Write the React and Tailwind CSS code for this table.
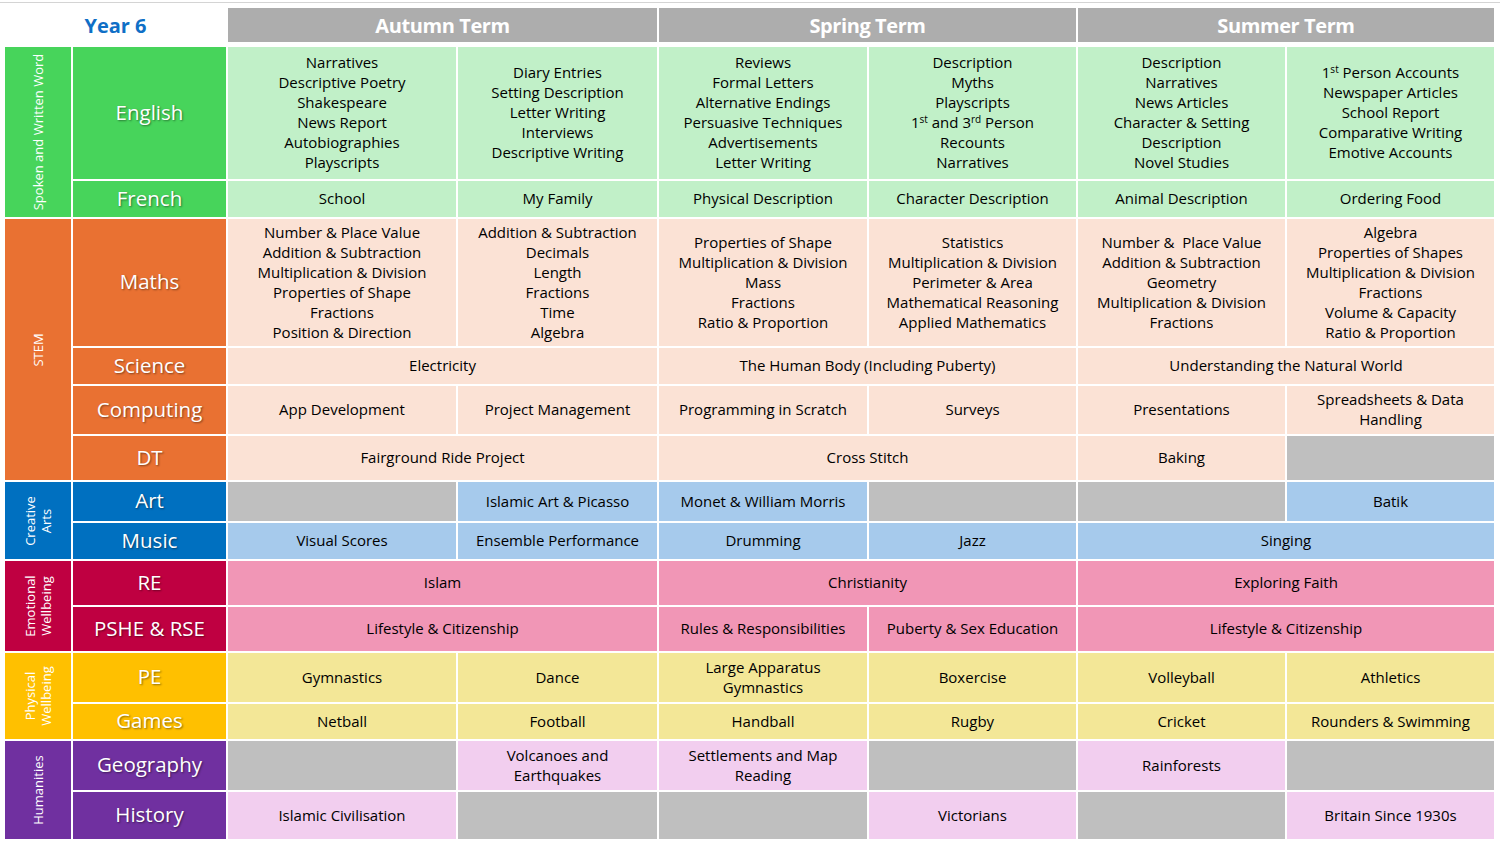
import React from 'react';

const FONT = "font-['Open_Sans','Liberation_Sans',sans-serif]";

const GREY = 'bg-[#bfbfbf]';

const groups = [
  {
    name: ['Spoken and Written Word'],
    bg: 'bg-[#47d45b]',
    cell: 'bg-[#c1f0c8]',
    rows: [
      {
        subject: 'English',
        cells: [
          { lines: ['Narratives', 'Descriptive Poetry', 'Shakespeare', 'News Report', 'Autobiographies', 'Playscripts'] },
          { lines: ['Diary Entries', 'Setting Description', 'Letter Writing', 'Interviews', 'Descriptive Writing'] },
          { lines: ['Reviews', 'Formal Letters', 'Alternative Endings', 'Persuasive Techniques', 'Advertisements', 'Letter Writing'] },
          {
            lines: [
              'Description',
              'Myths',
              'Playscripts',
              <>1<sup className="text-[10px]">st</sup> and 3<sup className="text-[10px]">rd</sup> Person</>,
              'Recounts',
              'Narratives',
            ],
          },
          { lines: ['Description', 'Narratives', 'News Articles', 'Character & Setting', 'Description', 'Novel Studies'] },
          {
            lines: [
              <>1<sup className="text-[10px]">st</sup> Person Accounts</>,
              'Newspaper Articles',
              'School Report',
              'Comparative Writing',
              'Emotive Accounts',
            ],
          },
        ],
      },
      {
        subject: 'French',
        cells: [
          { lines: ['School'] },
          { lines: ['My Family'] },
          { lines: ['Physical Description'] },
          { lines: ['Character Description'] },
          { lines: ['Animal Description'] },
          { lines: ['Ordering Food'] },
        ],
      },
    ],
  },
  {
    name: ['STEM'],
    bg: 'bg-[#e97132]',
    cell: 'bg-[#fbe2d5]',
    rows: [
      {
        subject: 'Maths',
        cells: [
          { lines: ['Number & Place Value', 'Addition & Subtraction', 'Multiplication & Division', 'Properties of Shape', 'Fractions', 'Position & Direction'] },
          { lines: ['Addition & Subtraction', 'Decimals', 'Length', 'Fractions', 'Time', 'Algebra'] },
          { lines: ['Properties of Shape', 'Multiplication & Division', 'Mass', 'Fractions', 'Ratio & Proportion'] },
          { lines: ['Statistics', 'Multiplication & Division', 'Perimeter & Area', 'Mathematical Reasoning', 'Applied Mathematics'] },
          { lines: ['Number &  Place Value', 'Addition & Subtraction', 'Geometry', 'Multiplication & Division', 'Fractions'] },
          { lines: ['Algebra', 'Properties of Shapes', 'Multiplication & Division', 'Fractions', 'Volume & Capacity', 'Ratio & Proportion'] },
        ],
      },
      {
        subject: 'Science',
        cells: [
          { lines: ['Electricity'], span: 2 },
          { lines: ['The Human Body (Including Puberty)'], span: 2 },
          { lines: ['Understanding the Natural World'], span: 2 },
        ],
      },
      {
        subject: 'Computing',
        cells: [
          { lines: ['App Development'] },
          { lines: ['Project Management'] },
          { lines: ['Programming in Scratch'] },
          { lines: ['Surveys'] },
          { lines: ['Presentations'] },
          { lines: ['Spreadsheets & Data', 'Handling'] },
        ],
      },
      {
        subject: 'DT',
        cells: [
          { lines: ['Fairground Ride Project'], span: 2 },
          { lines: ['Cross Stitch'], span: 2 },
          { lines: ['Baking'] },
          { empty: true },
        ],
      },
    ],
  },
  {
    name: ['Creative', 'Arts'],
    bg: 'bg-[#0070c0]',
    cell: 'bg-[#a6caec]',
    rows: [
      {
        subject: 'Art',
        cells: [
          { empty: true },
          { lines: ['Islamic Art & Picasso'] },
          { lines: ['Monet & William Morris'] },
          { empty: true },
          { empty: true },
          { lines: ['Batik'] },
        ],
      },
      {
        subject: 'Music',
        cells: [
          { lines: ['Visual Scores'] },
          { lines: ['Ensemble Performance'] },
          { lines: ['Drumming'] },
          { lines: ['Jazz'] },
          { lines: ['Singing'], span: 2 },
        ],
      },
    ],
  },
  {
    name: ['Emotional', 'Wellbeing'],
    bg: 'bg-[#bf0041]',
    cell: 'bg-[#f196b6]',
    rows: [
      {
        subject: 'RE',
        cells: [
          { lines: ['Islam'], span: 2 },
          { lines: ['Christianity'], span: 2 },
          { lines: ['Exploring Faith'], span: 2 },
        ],
      },
      {
        subject: 'PSHE & RSE',
        cells: [
          { lines: ['Lifestyle & Citizenship'], span: 2 },
          { lines: ['Rules & Responsibilities'] },
          { lines: ['Puberty & Sex Education'] },
          { lines: ['Lifestyle & Citizenship'], span: 2 },
        ],
      },
    ],
  },
  {
    name: ['Physical', 'Wellbeing'],
    bg: 'bg-[#ffc000]',
    cell: 'bg-[#f3e797]',
    rows: [
      {
        subject: 'PE',
        cells: [
          { lines: ['Gymnastics'] },
          { lines: ['Dance'] },
          { lines: ['Large Apparatus', 'Gymnastics'] },
          { lines: ['Boxercise'] },
          { lines: ['Volleyball'] },
          { lines: ['Athletics'] },
        ],
      },
      {
        subject: 'Games',
        cells: [
          { lines: ['Netball'] },
          { lines: ['Football'] },
          { lines: ['Handball'] },
          { lines: ['Rugby'] },
          { lines: ['Cricket'] },
          { lines: ['Rounders & Swimming'] },
        ],
      },
    ],
  },
  {
    name: ['Humanities'],
    bg: 'bg-[#7030a0]',
    cell: 'bg-[#f2ceef]',
    rows: [
      {
        subject: 'Geography',
        cells: [
          { empty: true },
          { lines: ['Volcanoes and', 'Earthquakes'] },
          { lines: ['Settlements and Map', 'Reading'] },
          { empty: true },
          { lines: ['Rainforests'] },
          { empty: true },
        ],
      },
      {
        subject: 'History',
        cells: [
          { lines: ['Islamic Civilisation'] },
          { empty: true },
          { empty: true },
          { lines: ['Victorians'] },
          { empty: true },
          { lines: ['Britain Since 1930s'] },
        ],
      },
    ],
  },
];

const rowSpanClass = { 1: 'row-span-1', 2: 'row-span-2', 4: 'row-span-4' };

const GroupLabel = ({ group }) => (
  <div
    className={`${group.bg} ${rowSpanClass[group.rows.length]} flex items-center justify-center overflow-hidden`}
  >
    <div className="-rotate-90 whitespace-nowrap text-center text-[13px] leading-[16px] text-white">
      {group.name.map((line, i) => (
        <div key={i}>{line}</div>
      ))}
    </div>
  </div>
);

const Cell = ({ cell, bg }) => (
  <div
    className={`${cell.empty ? GREY : bg} ${cell.span === 2 ? 'col-span-2' : ''} flex flex-col items-center justify-center pb-[2px] text-center text-[15px] font-medium leading-5 text-black`}
  >
    {cell.lines && cell.lines.map((line, i) => <div key={i} className="whitespace-pre">{line}</div>)}
  </div>
);

export default function App() {
  return (
    <div className={`w-[1500px] h-[848px] bg-white ${FONT}`}>
      <div className="pt-[2px]">
        <div className="h-px bg-[#d4d4d4]" />
      </div>

      {/* term header */}
      <div className="mt-[5px] pl-[5px] grid grid-cols-[66px_153px_228px_199px_208px_207px_207px_207px] gap-x-[2px] h-[34px]">
        <div className="col-span-2 flex items-center justify-center pt-[2px] text-[20px] font-bold text-[#0f6fc6]">
          Year 6
        </div>
        {['Autumn Term', 'Spring Term', 'Summer Term'].map((t) => (
          <div
            key={t}
            className="col-span-2 bg-[#adadad] flex items-center justify-center pt-[2px] text-[20px] font-bold text-white tracking-[-0.4px]"
          >
            {t}
          </div>
        ))}
      </div>

      {/* table body */}
      <div className="mt-[5px] pl-[5px] grid grid-cols-[66px_153px_228px_199px_208px_207px_207px_207px] grid-rows-[132px_36px_127px_36px_48px_44px_39px_36px_44px_44px_49px_35px_49px_47px] gap-[2px]">
        {groups.map((g) => (
          <React.Fragment key={g.name.join(' ')}>
            <GroupLabel group={g} />
            {g.rows.map((r) => (
              <React.Fragment key={r.subject}>
                <div
                  className={`${g.bg} flex items-center justify-center pb-[2px] text-[20.5px] text-white [text-shadow:1px_1px_2px_rgba(0,0,0,0.45)]`}
                >
                  {r.subject}
                </div>
                {r.cells.map((c, i) => (
                  <Cell key={i} cell={c} bg={g.cell} />
                ))}
              </React.Fragment>
            ))}
          </React.Fragment>
        ))}
      </div>
    </div>
  );
}
